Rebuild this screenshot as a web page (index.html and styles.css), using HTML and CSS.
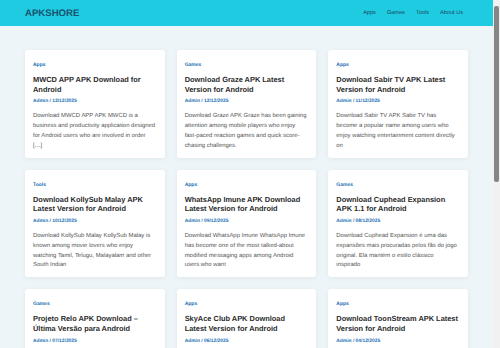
FILE: index.html
```html
<!DOCTYPE html>
<html lang="en">
<head>
  <meta charset="UTF-8" />
  <meta name="viewport" content="width=device-width, initial-scale=1" />
  <title>APKSHORE</title>
  <link rel="stylesheet" href="styles.css">
</head>
<body>
  <header class="site-header">
    <a class="logo" href="#">APKSHORE</a>
    <nav class="nav">
      <a href="#">Apps</a>
      <a href="#">Games</a>
      <a href="#">Tools</a>
      <a href="#">About Us</a>
    </nav>
  </header>

  <main class="posts">
    <article class="card">
      <span class="cat">Apps</span>
      <h2>MWCD APP APK Download for Android</h2>
      <div class="meta">Admin / 13/12/2025</div>
      <p>Download MWCD APP APK MWCD is a<br>business and productivity application designed<br>for Android users who are involved in order<br>[…]</p>
    </article>
    <article class="card">
      <span class="cat">Games</span>
      <h2>Download Graze APK Latest Version for Android</h2>
      <div class="meta">Admin / 12/12/2025</div>
      <p>Download Graze APK Graze has been gaining<br>attention among mobile players who enjoy<br>fast-paced reaction games and quick score-<br>chasing challenges.</p>
    </article>
    <article class="card">
      <span class="cat">Apps</span>
      <h2>Download Sabir TV APK Latest Version for Android</h2>
      <div class="meta">Admin / 11/12/2025</div>
      <p>Download Sabir TV APK Sabir TV has<br>become a popular name among users who<br>enjoy watching entertainment content directly<br>on</p>
    </article>

    <article class="card">
      <span class="cat">Tools</span>
      <h2>Download KollySub Malay APK Latest Version for Android</h2>
      <div class="meta">Admin / 10/12/2025</div>
      <p>Download KollySub Malay KollySub Malay is<br>known among movie lovers who enjoy<br>watching Tamil, Telugu, Malayalam and other<br>South Indian</p>
    </article>
    <article class="card">
      <span class="cat">Apps</span>
      <h2>WhatsApp Imune APK Download Latest Version for Android</h2>
      <div class="meta">Admin / 09/12/2025</div>
      <p>Download WhatsApp Imune WhatsApp Imune<br>has become one of the most talked-about<br>modified messaging apps among Android<br>users who want</p>
    </article>
    <article class="card">
      <span class="cat">Games</span>
      <h2>Download Cuphead Expansion APK 1.1 for Android</h2>
      <div class="meta">Admin / 08/12/2025</div>
      <p>Download Cuphead Expansion é uma das<br>expansões mais procuradas pelos fãs do jogo<br>original. Ela mantém o estilo clássico<br>inspirado</p>
    </article>

    <article class="card">
      <span class="cat">Games</span>
      <h2>Projeto Relo APK Download – Última Versão para Android</h2>
      <div class="meta">Admin / 07/12/2025</div>
      <p>Download Projeto Relo APK é um aplicativo que vem chamando atenção de usuários Android que buscam</p>
    </article>
    <article class="card">
      <span class="cat">Apps</span>
      <h2>SkyAce Club APK Download Latest Version for Android</h2>
      <div class="meta">Admin / 06/12/2025</div>
      <p>Download SkyAce Club APK SkyAce Club is an app that has been getting attention among Android users who</p>
    </article>
    <article class="card">
      <span class="cat">Apps</span>
      <h2>Download ToonStream APK Latest Version for Android</h2>
      <div class="meta">Admin / 04/12/2025</div>
      <p>Download ToonStream APK ToonStream is a popular streaming app for watching cartoons and anime on</p>
    </article>
  </main>

  <div class="scrollbar"><div class="thumb"></div></div>
</body>
</html>
```

FILE: styles.css
```css
body {
  font-family: 'Liberation Sans', Arial, sans-serif;
  margin: 0 7px 0 0;
  background: #eef5f8;
  color: #2b2b2b;
  text-rendering: geometricPrecision;
}
a { text-decoration: none; }

.site-header {
  height: 26px;
  padding: 0 25px;
  display: flex;
  align-items: center;
  justify-content: space-between;
  background: #1ecbe1;
}
.logo {
  font-size: 9.6px;
  font-weight: 700;
  color: #1a5270;
}
.nav {
  display: flex;
  gap: 11px;
  padding-right: 5px;
}
.nav a {
  font-size: 5.6px;
  color: #1d4a63;
}

.posts {
  display: grid;
  grid-template-columns: repeat(3, 1fr);
  gap: 12px;
  padding: 24px 25px 40px;
}
.card {
  background: #fff;
  border-radius: 3px;
  box-shadow: 0 1px 5px rgba(0,0,0,0.06);
  padding: 12px 8px 6px;
}
.cat {
  display: block;
  font-size: 5px;
  font-weight: 700;
  color: #1a6fb5;
}
.card h2 {
  margin: 7px 0 0;
  font-size: 7.43px;
  line-height: 9.7px;
  color: #2b2b2b;
}
.meta {
  margin-top: 5px;
  font-size: 4.9px;
  font-weight: 700;
  color: #1a6fb5;
}
.card p {
  margin: 8px 0 0;
  font-size: 5.93px;
  line-height: 9.8px;
  color: #555;
}

/* page scrollbar as it shows in the screenshot */
.scrollbar {
  position: fixed;
  top: 0;
  right: 0;
  bottom: 0;
  width: 7px;
  background: #f1f1f1;
  padding-top: 6px;
  box-sizing: border-box;
}
.thumb {
  height: 176px;
  margin: 0 1px;
  border-radius: 2px;
  background: #858585;
}
```
